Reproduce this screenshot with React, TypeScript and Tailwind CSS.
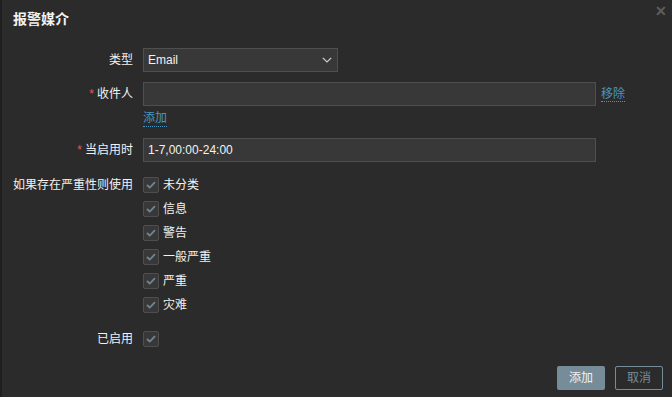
import React from "react";

const font = { fontFamily: '"Liberation Sans", "Noto Sans CJK SC", Arial, sans-serif' };

function Check() {
  return (
    <span className="w-[16px] h-[16px] shrink-0 rounded-[2px] border border-[#4f4f4f] bg-[#383838] flex items-center justify-center">
      <svg width="10" height="8" viewBox="0 0 10 8" fill="none">
        <path d="M1 4 L3.8 6.6 L9 1.2" stroke="#6f8895" strokeWidth="1.8" />
      </svg>
    </span>
  );
}

function Label({ children, req }: { children: React.ReactNode; req?: boolean }) {
  return (
    <div className="w-[120px] shrink-0 text-right text-[12px] leading-[16px] text-[#f2f2f2]">
      {req && <span className="text-[#e45959] mr-[3px]">*</span>}
      {children}
    </div>
  );
}

export default function App() {
  const sev = ["未分类", "信息", "警告", "一般严重", "严重", "灾难"];
  return (
    <div className="w-[672px] h-[397px] bg-[#2b2b2b] flex overflow-hidden" style={font}>
      <div className="w-[2px] h-full bg-[#1f1f1f]" />
      <div className="flex-1 relative flex flex-col">
        <span className="absolute right-[5px] top-[4px] text-[#5e5e5e] text-[14px] leading-[14px] font-bold">✕</span>
        <div className="pl-[11px] pt-[11px] text-[14px] leading-[17px] font-bold text-[#f2f2f2]">报警媒介</div>

        <div className="flex items-center gap-[10px] pl-[11px] mt-[20px]">
          <Label>类型</Label>
          <div className="w-[195px] h-[24px] border border-[#4f4f4f] bg-[#383838] flex items-center justify-between pl-[4px] pr-[5px]">
            <span className="text-[12px] text-[#f2f2f2]">Email</span>
            <svg width="10" height="6" viewBox="0 0 10 6" fill="none">
              <path d="M0.8 0.8 L5 5 L9.2 0.8" stroke="#d0d0d0" strokeWidth="1.2" />
            </svg>
          </div>
        </div>

        <div className="flex items-center gap-[10px] pl-[11px] mt-[10px]">
          <Label req>收件人</Label>
          <div className="w-[453px] h-[24px] border border-[#4f4f4f] bg-[#383838]" />
          <span className="ml-[-5px] text-[12px] leading-[14px] text-[#4796c4] border-b border-dotted border-[#4796c4]">移除</span>
        </div>

        <div className="flex gap-[10px] pl-[11px] mt-[5px]">
          <div className="w-[120px]" />
          <span className="text-[12px] leading-[15px] text-[#4796c4] border-b border-dotted border-[#4796c4]">添加</span>
        </div>

        <div className="flex items-center gap-[10px] pl-[11px] mt-[11px]">
          <Label req>当启用时</Label>
          <div className="w-[453px] h-[24px] border border-[#4f4f4f] bg-[#383838] flex items-center pl-[4px]">
            <span className="text-[12px] text-[#f2f2f2]">1-7,00:00-24:00</span>
          </div>
        </div>

        <div className="flex gap-[10px] pl-[11px] mt-[15px]">
          <Label>如果存在严重性则使用</Label>
          <div className="flex flex-col gap-[8px]">
            {sev.map((s) => (
              <div key={s} className="flex items-center gap-[4px] h-[16px]">
                <Check />
                <span className="text-[12px] leading-[16px] text-[#f2f2f2]">{s}</span>
              </div>
            ))}
          </div>
        </div>

        <div className="flex items-center gap-[10px] pl-[11px] mt-[18px]">
          <Label>已启用</Label>
          <Check />
        </div>

        <div className="flex-1" />
        <div className="flex justify-end gap-[10px] pr-[9px] pb-[7px]">
          <button className="w-[48px] h-[24px] rounded-[2px] bg-[#768d99] text-[#f2f2f2] text-[12px]">添加</button>
          <button className="w-[48px] h-[24px] rounded-[2px] border border-[#768d99] text-[#768d99] text-[12px]">取消</button>
        </div>
      </div>
    </div>
  );
}
